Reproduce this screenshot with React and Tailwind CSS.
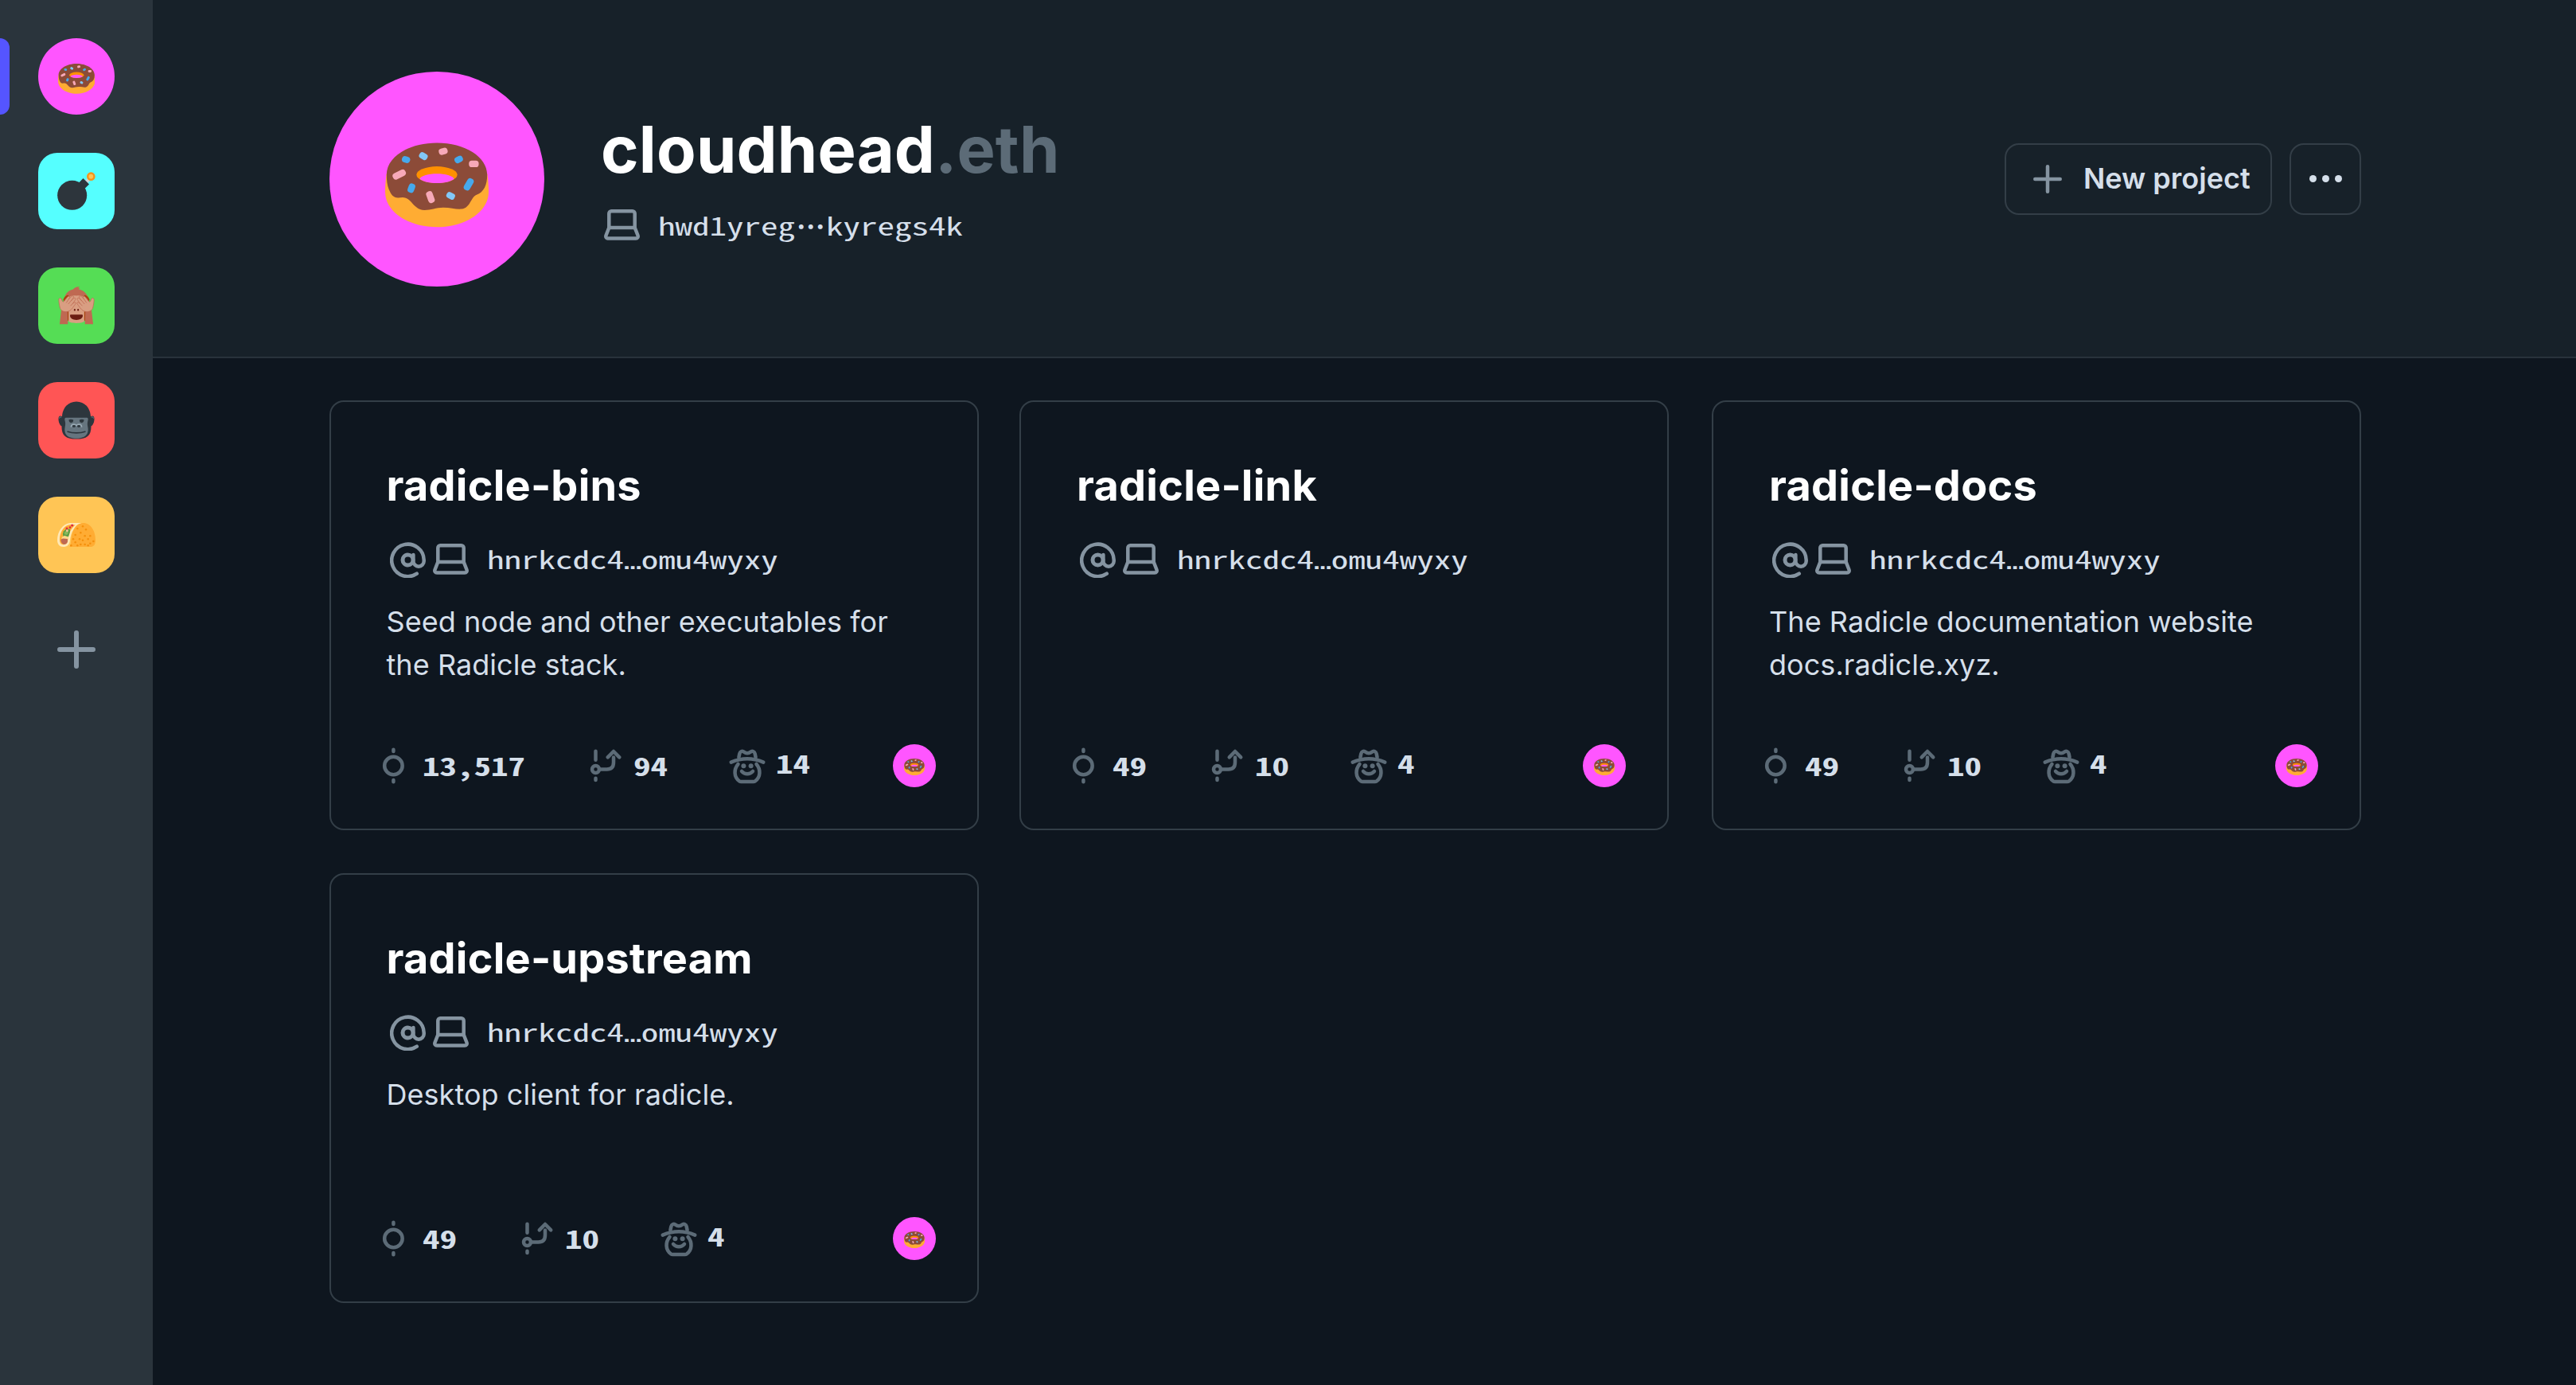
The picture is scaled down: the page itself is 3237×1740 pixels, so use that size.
const MONO = "font-['Noto_Sans_Mono_CJK_SC','Liberation_Mono',monospace]";

// Fixed-pitch text: every character takes 21.6px.
function Mono({ children }) {
  return (
    <span className="inline-block whitespace-nowrap" style={{ width: children.length * 21.6 }}>
      <span className={`inline-block origin-left scale-x-[1.366] text-[31.5px] leading-[54px] ${MONO}`}>
        {children.split("…").map((part, i) => (
          <span key={i}>
            {i > 0 && <span className="font-['Liberation_Mono',monospace] text-[26.25px] leading-[1px] font-bold">…</span>}
            {part}
          </span>
        ))}
      </span>
    </span>
  );
}

function Donut({ className }) {
  return (
    <svg viewBox="0 0 36 36" className={className}>
      <path fill="#ffac33" d="M.5 16C.2 18 0 20 0 22.5 0 29.3 8 34.7 18 34.7s18-5.4 18-12.2c0-2.500-.2-4.500-.5-6.500z" />
      <path fill="#8c4b38" d="M18 5.400C8.300 5.400.5 10.200.5 16.500c0 2 .2 3.700.8 5.100.8 1.800 1.500 2.900 3.200 2.900.9 0 1.700-.3 2.700.1 2.300.9 3 4.100 6.500 4.200 2.200 0 4-.9 6.500-.9 2.600 0 4.600.7 6.400.5 3-.3 3.200-4.100 5.200-4.900 2.600-1 3.700-3.400 3.700-7C35.500 10.200 27.700 5.400 18 5.400z" />
      <ellipse cx="18" cy="16.500" rx="7.100" ry="2.900" fill="#ff9000" />
      <path fill="#ff55ff" d="M12 17.900c.5-1.100 3-1.800 6-1.800s5.500.7 6 1.800c-1.200.9-3.400 1.500-6 1.500s-4.800-.6-6-1.500z" />
      <g fill="#f7a9b8">
        <rect x="18.650" y="7.250" width="3.100" height="2.200" rx="1" transform="rotate(-15 20.200 8.350)" />
        <rect x="29.150" y="11.550" width="3.400" height="2.300" rx="1" />
        <rect x="2.500" y="15.250" width="4.800" height="2.300" rx="1" transform="rotate(-27 4.900 16.400)" />
        <rect x="14.600" y="22.150" width="2.300" height="4.200" rx="1" transform="rotate(-20 15.750 24.250)" />
      </g>
      <g fill="#46a9ec">
        <rect x="5.800" y="10.100" width="2.900" height="2.200" rx="1.050" transform="rotate(15 7.200 11.200)" />
        <rect x="24.100" y="10.100" width="3" height="2.200" rx="1.050" transform="rotate(-25 25.550 11.200)" />
        <rect x="27.950" y="17.600" width="2.300" height="4.500" rx="1.050" transform="rotate(30 29.100 19.800)" />
        <rect x="8" y="19.500" width="2.300" height="3.300" rx="1.050" transform="rotate(20 9.150 21.100)" />
      </g>
      <g fill="#82c8f7">
        <rect x="11.800" y="8.900" width="3" height="2.200" rx=".9" transform="rotate(30 13.300 10)" />
        <rect x="21.300" y="22.700" width="3" height="2.200" rx=".9" transform="rotate(28 22.800 23.800)" />
      </g>
    </svg>
  );
}

function Bomb({ className }) {
  return (
    <svg viewBox="0 0 36 36" className={className}>
      <path fill="#ccd6dd" d="M26.200 8.200l2.700-2.700 2.200 2.300-2.500 2.700z" />
      <circle cx="14" cy="22" r="13.900" fill="#2d353c" />
      <path fill="#2d353c" d="M20.400 10.100L24.400 6 30 11.600l-4.200 4.200z" />
      <circle cx="31.750" cy="4.250" r="4" fill="#f4941c" />
      <circle cx="31.750" cy="4.250" r="2.100" fill="#ffc453" />
    </svg>
  );
}

function Monkey({ className }) {
  return (
    <svg viewBox="0 0 36 36" className={className}>
      <path fill="#bf6952" d="M6.500 11.500C7.500 6.500 11 3.100 15 2.600c1-1.500 3.500-2.900 6.300-2.300-.9.400-1.400.9-1.600 1.300.7-.1 1.300 0 1.700.1-.6.2-1 .5-1.300.9 4.200.6 8.100 3.900 9.400 8.900L31 22H5z" />
      <path fill="#bf6952" d="M4 20h6.500l-.6 15.500H2.200zM32 20h-6.500l.6 15.500h7.700z" />
      <path fill="#a9440f" d="M5.500 12.500c.8-2.200 2.300-4 4.500-4.600l2 2-5 5zM30.500 12.500c-.8-2.200-2.300-4-4.500-4.600l-2 2 5 5zM9.600 21h2v11h-1.800zM26.400 21h-2v11h1.800z" />
      <path fill="#d99e82" d="M10.600 12c0-2.700 3-3.900 7.400-3.400 4.400-.5 7.400.7 7.400 3.400v20.500c0 1.300-3.600 2-7.400 2s-7.400-.7-7.400-2z" />
      <path fill="#d99e82" stroke="#bf6952" strokeWidth=".55" strokeLinejoin="round" d="M1.400 12.400c.2-2 2.200-1.900 2.700-.3.300 1 .7 2.200 1.500 2.300 1.100-.3 2.500-3.400 4.600-5 1.300-.7 1.900.3 1.400 1.100l-1 1.600 3-3c1-.9 2.400 0 1.600 1.300l-2 2.800 2.400-2.200c1.200-.8 2 .3 1.400 1.400L14.600 16l1.300-1c1-.6 1.900.3 1.300 1.300-2.500 3.300-4.200 6.900-8.200 7.400-3.500.3-6-1.300-6.600-4.200-.6-2.800-1-4.900-1-7.100z" />
      <path fill="#d99e82" stroke="#bf6952" strokeWidth=".55" strokeLinejoin="round" d="M34.600 12.400c-.2-2-2.200-1.900-2.700-.3-.3 1-.7 2.200-1.500 2.300-1.100-.3-2.500-3.400-4.600-5-1.300-.7-1.900.3-1.400 1.100l1 1.600-3-3c-1-.9-2.400 0-1.600 1.300l2 2.800-2.400-2.200c-1.200-.8-2 .3-1.400 1.400l2.400 3.600-1.300-1c-1-.6-1.900.3-1.300 1.300 2.500 3.300 4.200 6.900 8.200 7.400 3.500.3 6-1.300 6.600-4.200.6-2.800 1-4.900 1-7.100z" />
      <g fill="none" stroke="#bf6952" strokeWidth=".6" strokeLinecap="round">
        <path d="M10.600 12.100l-2 3M13.200 13.100l-2.700 3.200M14.600 16l-2 2M25.400 12.100l2 3M22.800 13.100l2.700 3.200M21.400 16l2 2" />
      </g>
      <ellipse cx="16.400" cy="22" rx=".75" ry="1" fill="#6b1d12" />
      <ellipse cx="19.600" cy="22" rx=".75" ry="1" fill="#6b1d12" />
      <path fill="#6b1d12" d="M12 27.400c0-.7.300-1 1-1h10c.7 0 1 .3 1 1 0 2.300-2.500 4.100-6 4.100s-6-1.800-6-4.100z" />
    </svg>
  );
}

function Gorilla({ className }) {
  return (
    <svg viewBox="0 0 36 36" className={className}>
      <path fill="#2d363d" d="M4.500 14.500C5 6 10.500.3 18 .3S31 6 31.500 14.500c2-1.600 3.500-.2 3.400 2.300-.1 3.200-1.400 5.800-3 6.700C32 32.500 28 35.700 18 35.700S4 32.500 4.100 23.500C2.500 22.600 1.200 20 1.100 16.800c-.1-2.500 1.400-3.900 3.400-2.300z" />
      <path fill="none" stroke="#5d6c76" strokeWidth=".8" strokeLinecap="round" d="M1.900 16c.3-1 1-1.400 1.800-.9M34.100 16c-.3-1-1-1.400-1.800-.9" />
      <path fill="#66757f" d="M8.200 15.600h19.600c1.300 0 1.500 1.400.9 3.400-.5 2-.3 3.600.1 5.500 1 5.600-1.300 10.500-10.800 10.500S6.200 30.100 7.200 24.500c.4-1.900.6-3.500.1-5.500-.6-2-.4-3.400.9-3.400z" />
      <path fill="#2d363d" d="M10.900 17.500c1.500-.7 2.800-.5 4.200.2.200 1.700-.7 2.700-2.100 2.700s-2.200-1.100-2.100-2.900zM25.100 17.500c-1.500-.7-2.800-.5-4.200.2-.2 1.700.7 2.700 2.100 2.700s2.200-1.100 2.100-2.900z" />
      <path fill="none" stroke="#99aab5" strokeWidth="1.300" strokeLinecap="round" d="M13.100 24c.2-2.300 3.300-3 4.900-1.200 1.600-1.800 4.700-1.100 4.900 1.200" />
      <ellipse cx="15.700" cy="23.600" rx="1.500" ry="1.100" fill="#2d363d" />
      <ellipse cx="20.300" cy="23.600" rx="1.500" ry="1.100" fill="#2d363d" />
      <path fill="none" stroke="#2d363d" strokeWidth="1.200" strokeLinecap="round" d="M9.800 28.700c4.500 1.600 12 1.600 16.400 0" />
    </svg>
  );
}

function Taco({ className }) {
  const dots = [[24, 10], [27, 13], [19, 12], [22, 16], [17, 18], [26, 19], [31, 19], [15, 22], [21, 22], [24, 23], [29, 22], [34, 24], [17, 25], [31, 26], [13, 28], [19, 28], [22, 27], [26, 27], [29, 28]];
  return (
    <svg viewBox="0 0 36 36" className={className}>
      <path fill="#ffe8b6" d="M12 6.800C5 7.500 0 15 0 23c0 3.500 2.200 6.200 5.500 6.200 4 0 6-2 6.500-6.200.8-7 4-13.500 11-16.200z" />
      <path fill="#ffac33" d="M10 8.800C5.500 10.500 2.300 16 2.200 22.500c0 2.700 1.300 4.600 3.500 4.600 2.600 0 3.800-1.400 4.200-4.100C10.600 16 13.500 11.500 17 8.600c-2-.6-4.800-.6-7 .2z" />
      <path fill="#5c9e45" d="M6 14.500l2.500-2.200 3.600.3-.2 3-1.500 4.400-4.900-.8-.3-2.200z" />
      <path fill="#88b85c" d="M7 15l2-1 1.500 2-1.500 2-2.400-.5z" />
      <path fill="#ffd98a" d="M4.400 20l2.500-1.300 3.600 1.100-.3 2.200H4z" />
      <path fill="#bf6952" d="M3.300 22.400l2-1 4.300.3.200 2.300c-.4 2.100-1.700 3-3.600 3-1.700-.3-3-2-2.900-4.600z" />
      <g fill="#dd2e44">
        <circle cx="14" cy="9" r="1.200" />
        <circle cx="12" cy="11" r="1" />
        <circle cx="9" cy="12" r="1.100" />
      </g>
      <circle cx="9.300" cy="14" r="1.100" fill="#f7c59a" />
      <path fill="#ffac33" d="M11.500 29.200c1.500-1.800 1.200-5 1.600-7.700C14.200 13.200 17.500 6.800 24.500 6.800c6.800 0 11.500 7.500 11.500 16 0 4.300-1.500 6.400-5 6.400z" />
      <g fill="#f4900c">
        {dots.map(([x, y], i) => <circle key={i} cx={x} cy={y} r=".95" />)}
      </g>
    </svg>
  );
}

function Plus({ className }) {
  return (
    <svg viewBox="0 0 48 48" className={className} fill="none" stroke="#8594a1" strokeWidth="6" strokeLinecap="round">
      <path d="M24 3v42M3 24h42" />
    </svg>
  );
}

function Laptop() {
  return (
    <svg viewBox="0 0 45 39" className="h-[39px] w-[45px] shrink-0" fill="none" stroke="#8594a1" strokeWidth="4.500" strokeLinejoin="round">
      <path d="M6.300 23V5.250a3 3 0 0 1 3-3h26.400a3 3 0 0 1 3 3V23z" />
      <path d="M6.300 23L2.600 32.500c-.9 2.200.3 4 2.400 4h35c2.100 0 3.300-1.800 2.400-4L38.700 23" />
    </svg>
  );
}

function At() {
  return (
    <svg viewBox="-22.500 -22.500 45 45" className="size-[45px] shrink-0" fill="none" stroke="#8594a1" strokeWidth="4.500" strokeLinecap="round">
      <circle r="6.500" strokeWidth="5" />
      <path d="M6.900-6.500V1.500a6.650 6.650 0 0 0 13.300 0V0A20.250 20.250 0 1 0 11.300 17.200" />
    </svg>
  );
}

function CommitIcon() {
  return (
    <svg viewBox="0 0 54 54" className="size-[54px]" fill="none" stroke="#5c6b77" strokeWidth="4.500" strokeLinecap="round">
      <circle cx="27.400" cy="27" r="11.250" />
      <path d="M27.400 6.750v2.250M27.400 45v2.250" />
    </svg>
  );
}

function BranchIcon() {
  return (
    <svg viewBox="0 0 54 54" className="size-[54px]" fill="none" stroke="#5c6b77" strokeWidth="4.500" strokeLinecap="round" strokeLinejoin="round">
      <path d="M17.500 8.750v11M17.500 42.750v2.250M22 31.500h9.500q8.500 0 8.500-8.750V16.500M32.750 16.300l7.250-7.300 7.250 7.300" />
      <circle cx="17.500" cy="31.500" r="4.500" />
    </svg>
  );
}

function SeedIcon() {
  return (
    <svg viewBox="0 0 54 54" className="size-[54px]" fill="none" stroke="#5c6b77" strokeWidth="4.500" strokeLinecap="round" strokeLinejoin="round">
      <path d="M6.700 22.600Q27 13.800 47.300 22.600" />
      <path d="M16.400 16.500l.9-4.500c.6-3 3.500-4.200 5.700-2.300 2.400 2.100 5.600 2.100 8 0 2.200-1.900 5.100-.7 5.700 2.300l.9 4.500" />
      <path d="M15.500 25c-5.500 6.500-5.500 16 1.500 21.300.8.500 1.400.7 2.300.7h15.400c.9 0 1.500-.2 2.300-.7C44 41 44 31.500 38.500 25" />
      <path d="M20 34c4 4.300 10 4.300 14 0" />
      <circle cx="22.400" cy="27.300" r="3" fill="#5c6b77" stroke="none" />
      <circle cx="31.600" cy="27.300" r="3" fill="#5c6b77" stroke="none" />
    </svg>
  );
}

function Card({ name, desc, commits, branches, seeds }) {
  return (
    <article className="flex h-[540px] w-[816px] flex-col rounded-[18px] border-2 border-[#333e47] pt-[78px] pr-[52px] pb-[52.5px] pl-[51px]">
      <h2 className="pl-[19px] text-[54px] leading-[54px] font-bold tracking-[0.22px] whitespace-nowrap text-white">{name}</h2>
      <div className="mt-[39px] flex h-[54px] items-center pl-[23px] text-[#d5dfea]">
        <At />
        <div className="mr-[23px] ml-[9px] flex pb-[2px]"><Laptop /></div>
        <div className="flex pb-[4px]"><Mono>hnrkcdc4…omu4wyxy</Mono></div>
      </div>
      <p className="mt-[24px] w-[660px] pl-[19px] text-[36px] leading-[54px] tracking-[0.05px] text-[#d5dfea]">{desc}</p>
      <div className="mt-auto flex h-[54px] items-center font-bold text-[#d5dfea]">
        <CommitIcon />
        <div className="ml-[10px] flex pb-[2px]"><Mono>{commits}</Mono></div>
        <div className="ml-[71px]"><BranchIcon /></div>
        <div className="ml-[11px] flex pb-[2px]"><Mono>{branches}</Mono></div>
        <div className="ml-[73px]"><SeedIcon /></div>
        <div className="ml-[9px] flex pb-[7px]"><Mono>{seeds}</Mono></div>
        <div className="ml-auto flex size-[54px] items-center justify-center rounded-full bg-[#ff55ff]">
          <Donut className="size-[26px]" />
        </div>
      </div>
    </article>
  );
}

export default function App() {
  return (
    <div className="flex h-[1740px] w-[3237px] overflow-hidden bg-[#0e161f] font-[Inter,sans-serif]">
      <aside className="relative flex w-[192px] shrink-0 flex-col items-center gap-[48px] bg-[#2a343c] pt-[48px]">
        <div className="absolute top-[48px] left-0 h-[96px] w-[12px] rounded-r-[12px] bg-[#5555ff]" />
        <div className="flex size-[96px] items-center justify-center rounded-full bg-[#ff55ff]"><Donut className="size-[46.500px]" /></div>
        <div className="flex size-[96px] items-center justify-center rounded-[24px] bg-[#55ffff]"><Bomb className="size-[48px]" /></div>
        <div className="flex size-[96px] items-center justify-center rounded-[24px] bg-[#55dd55]"><Monkey className="size-[48px]" /></div>
        <div className="flex size-[96px] items-center justify-center rounded-[24px] bg-[#ff5555]"><Gorilla className="size-[48px]" /></div>
        <div className="flex size-[96px] items-center justify-center rounded-[24px] bg-[#ffc555]"><Taco className="size-[48px]" /></div>
        <div className="flex size-[96px] items-center justify-center"><Plus className="size-[48px]" /></div>
      </aside>
      <main className="flex-1">
        <header className="flex h-[450px] items-center border-b-2 border-[#28323b] bg-[#172129] pt-[2px] pr-[270px] pl-[221.500px]">
          <div className="flex size-[270px] items-center justify-center rounded-full bg-[#ff55ff]"><Donut className="size-[130px]" /></div>
          <div className="ml-[71.5px]">
            <h1 className="text-[81px] leading-[90px] font-bold tracking-[0.2px] text-white">cloudhead<span className="text-[#5c6b77]">.eth</span></h1>
            <div className="mt-[21px] -mb-px flex h-[55px] items-end pl-[4px] text-[#d5dfea]">
              <div className="mb-[7px]"><Laptop /></div>
              <div className="ml-[23px] flex items-baseline">
                <Mono>hwd1yreg</Mono>
                <span className="relative top-[3px] flex h-[40px] w-[38px] justify-center font-['Noto_Sans_CJK_JP',sans-serif] text-[36px] leading-[40px] font-bold">⋯</span>
                <Mono>kyregs4k</Mono>
              </div>
            </div>
          </div>
          <div className="mb-[1px] ml-auto flex gap-[22px]">
            <button className="flex h-[90px] w-[336px] items-center rounded-[18px] border-2 border-[#333e47] pl-[34px]">
              <Plus className="size-[36px]" />
              <span className="ml-[27px] pb-[2px] text-[36px] leading-[54px] font-semibold whitespace-nowrap text-[#d5dfea]">New project</span>
            </button>
            <button className="flex size-[90px] items-center justify-center gap-[7px] rounded-[18px] border-2 border-[#333e47]">
              <i className="size-[9px] rounded-full bg-[#d5dfea]" />
              <i className="size-[9px] rounded-full bg-[#d5dfea]" />
              <i className="size-[9px] rounded-full bg-[#d5dfea]" />
            </button>
          </div>
        </header>
        <section className="grid grid-cols-[867.5px_870px_816px] gap-y-[54px] pt-[53px] pl-[221.500px]">
          <Card name="radicle-bins" desc="Seed node and other executables for the Radicle stack." commits="13,517" branches="94" seeds="14" />
          <Card name="radicle-link" desc="" commits="49" branches="10" seeds="4" />
          <Card name="radicle-docs" desc="The Radicle documentation website docs.radicle.xyz." commits="49" branches="10" seeds="4" />
          <Card name="radicle-upstream" desc="Desktop client for radicle." commits="49" branches="10" seeds="4" />
        </section>
      </main>
    </div>
  );
}
